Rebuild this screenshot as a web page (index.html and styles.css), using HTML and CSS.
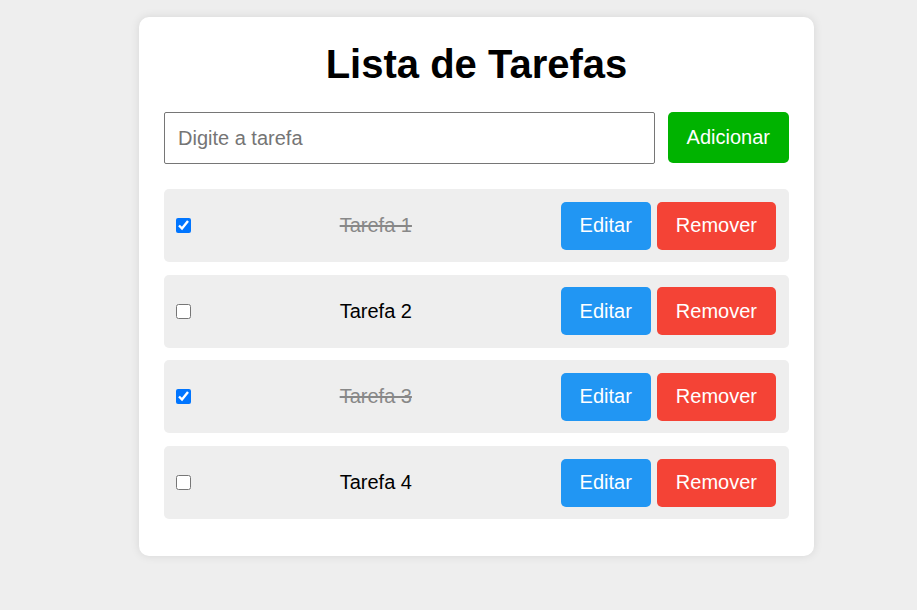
FILE: index.html
```html
<!DOCTYPE html>
<html lang="pt">
<head>
<meta charset="utf-8">
<title>Lista de Tarefas</title>
<link rel="stylesheet" href="styles.css">
</head>
<body>
<div class="card">
  <h1 class="title">Lista de Tarefas</h1>
  <div class="add-row">
    <input class="task-input" type="text" placeholder="Digite a tarefa">
    <button class="btn btn-add">Adicionar</button>
  </div>
  <ul class="list">
    <li class="item">
      <input class="check" type="checkbox" checked>
      <span class="label done">Tarefa 1</span>
      <button class="btn btn-edit">Editar</button>
      <button class="btn btn-remove">Remover</button>
    </li>
    <li class="item">
      <input class="check" type="checkbox">
      <span class="label">Tarefa 2</span>
      <button class="btn btn-edit">Editar</button>
      <button class="btn btn-remove">Remover</button>
    </li>
    <li class="item">
      <input class="check" type="checkbox" checked>
      <span class="label done">Tarefa 3</span>
      <button class="btn btn-edit">Editar</button>
      <button class="btn btn-remove">Remover</button>
    </li>
    <li class="item">
      <input class="check" type="checkbox">
      <span class="label">Tarefa 4</span>
      <button class="btn btn-edit">Editar</button>
      <button class="btn btn-remove">Remover</button>
    </li>
  </ul>
</div>
</body>
</html>
```
FILE: styles.css
```css
html, body {
  margin: 0;
  padding: 0;
}
body {
  background: #eeeeee;
  font-family: "Liberation Sans", Arial, sans-serif;
  padding-top: 17px;
  min-height: 610px;
  box-sizing: border-box;
}
.card {
  width: 625px;
  margin: 0 0 0 139px;
  padding: 24px 25px 24.5px;
  background: #ffffff;
  border-radius: 10px;
  box-shadow: 0 0 10px rgba(0, 0, 0, 0.1);
}
.title {
  margin: 0 0 25px;
  font-size: 40px;
  line-height: 46px;
  text-align: center;
  color: #000;
}
.add-row {
  display: flex;
  gap: 13px;
  margin-bottom: 25px;
}
.task-input {
  flex: 1;
  height: 52px;
  box-sizing: border-box;
  margin: 0;
  padding: 0 13px;
  border: 1px solid #767676;
  border-radius: 2px;
  font-family: inherit;
  font-size: 20px;
  color: #000;
}
.task-input::placeholder {
  color: #757575;
}
.btn {
  border: none;
  margin: 0;
  color: #fff;
  font-family: inherit;
  font-size: 20px;
  border-radius: 5px;
  padding: 0 19px;
  cursor: pointer;
}
.btn-add {
  background: #00b300;
  height: 51px;
}
.list {
  list-style: none;
  margin: 0;
  padding: 0;
  display: flex;
  flex-direction: column;
  gap: 12.7px;
}
.item {
  display: flex;
  align-items: center;
  gap: 6px;
  background: #eeeeee;
  border-radius: 5px;
  padding: 12.5px 13px 12.5px 12px;
}
.item:last-child {
  margin-bottom: 12.5px;
}
.check {
  width: 15px;
  height: 15px;
  margin: 0;
}
.label {
  flex: 1;
  text-align: center;
  font-size: 20px;
  color: #000;
}
.label.done {
  text-decoration: line-through;
  color: #888888;
}
.btn-edit {
  background: #2196f3;
  height: 48px;
}
.btn-remove {
  background: #f44336;
  height: 48px;
}
```
